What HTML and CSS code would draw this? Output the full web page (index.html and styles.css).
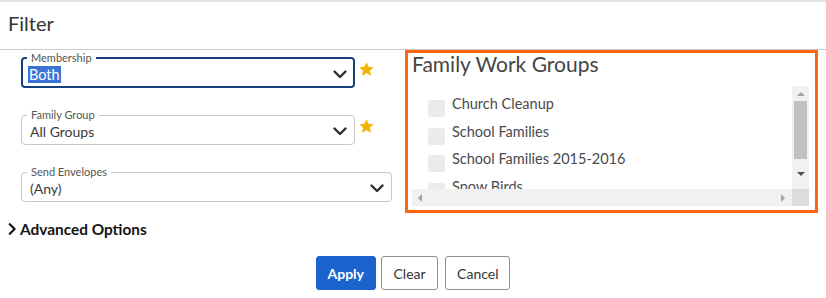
FILE: index.html
```html
<!DOCTYPE html>
<html lang="en">
<head>
<meta charset="utf-8">
<title>Filter</title>
<link rel="stylesheet" href="styles.css">
</head>
<body>
<div class="backdrop-strip"></div>
<header class="dlg-header">
  <h1 class="dlg-title">Filter</h1>
</header>
<main class="dlg-body">
  <section class="fields">
    <div class="field-row">
      <fieldset class="field field-focus">
        <legend class="field-label">Membership</legend>
        <div class="field-control">
          <span class="field-value selected">Both</span>
          <svg class="chev-down" width="14" height="9" viewBox="0 0 14 9"><path d="M1.5 1.5 L7 7 L12.5 1.5" fill="none" stroke="#2b2f33" stroke-width="2.4" stroke-linecap="round" stroke-linejoin="round"/></svg>
        </div>
      </fieldset>
      <svg class="star" width="15" height="15" viewBox="0 0 24 24"><path d="M12 1.5 L15.1 8.2 L22.4 8.9 L16.9 13.8 L18.5 21 L12 17.3 L5.5 21 L7.1 13.8 L1.6 8.9 L8.9 8.2 Z" fill="#f0b400" stroke="#f0b400" stroke-width="1.2" stroke-linejoin="round"/></svg>
    </div>
    <div class="field-row">
      <fieldset class="field">
        <legend class="field-label">Family Group</legend>
        <div class="field-control">
          <span class="field-value">All Groups</span>
          <svg class="chev-down" width="14" height="9" viewBox="0 0 14 9"><path d="M1.5 1.5 L7 7 L12.5 1.5" fill="none" stroke="#2b2f33" stroke-width="2.4" stroke-linecap="round" stroke-linejoin="round"/></svg>
        </div>
      </fieldset>
      <svg class="star" width="15" height="15" viewBox="0 0 24 24"><path d="M12 1.5 L15.1 8.2 L22.4 8.9 L16.9 13.8 L18.5 21 L12 17.3 L5.5 21 L7.1 13.8 L1.6 8.9 L8.9 8.2 Z" fill="#f0b400" stroke="#f0b400" stroke-width="1.2" stroke-linejoin="round"/></svg>
    </div>
    <div class="field-row">
      <fieldset class="field field-wide">
        <legend class="field-label">Send Envelopes</legend>
        <div class="field-control">
          <span class="field-value">(Any)</span>
          <svg class="chev-down" width="14" height="9" viewBox="0 0 14 9"><path d="M1.5 1.5 L7 7 L12.5 1.5" fill="none" stroke="#2b2f33" stroke-width="2.4" stroke-linecap="round" stroke-linejoin="round"/></svg>
        </div>
      </fieldset>
    </div>
  </section>
  <section class="groups">
    <h2 class="groups-title">Family Work Groups</h2>
    <div class="list-box">
      <div class="list-view">
        <label class="list-item"><span class="check"></span><span class="item-text">Church Cleanup</span></label>
        <label class="list-item"><span class="check"></span><span class="item-text">School Families</span></label>
        <label class="list-item"><span class="check"></span><span class="item-text">School Families 2015-2016</span></label>
        <label class="list-item"><span class="check"></span><span class="item-text">Snow Birds</span></label>
      </div>
      <div class="vscroll">
        <span class="arrow arrow-up"></span>
        <span class="vthumb"></span>
        <span class="arrow arrow-down"></span>
      </div>
      <div class="hscroll">
        <span class="arrow arrow-left"></span>
        <span class="arrow arrow-right"></span>
      </div>
      <div class="corner"></div>
    </div>
  </section>
</main>
<div class="advanced">
  <svg class="chev-right" width="9" height="12" viewBox="0 0 9 12"><path d="M1.8 1.2 L6.6 6 L1.8 10.8" fill="none" stroke="#151515" stroke-width="2.2" stroke-linecap="round" stroke-linejoin="round"/></svg>
  <span class="advanced-text">Advanced Options</span>
</div>
<div class="actions">
  <button class="btn btn-primary">Apply</button>
  <button class="btn btn-secondary btn-clear">Clear</button>
  <button class="btn btn-secondary btn-cancel">Cancel</button>
</div>
</body>
</html>
```
FILE: styles.css
```css
* { box-sizing: border-box; }
html, body { margin: 0; padding: 0; background: #fff; }
body {
  width: 826px;
  height: 298px;
  overflow: hidden;
  font-family: Lato, "Noto Sans", sans-serif;
  color: #333;
}
.backdrop-strip {
  height: 2px;
  background: #e2e2e2;
}
.dlg-header {
  height: 48px;
  border-bottom: 1px solid #c9c9c9;
  padding: 9px 0 0 8px;
}
.dlg-title {
  margin: 0;
  font-size: 20px;
  line-height: 24px;
  font-weight: 400;
  color: #333;
}
.dlg-body {
  display: grid;
  grid-template-columns: 384px 413px;
  padding-left: 21px;
}
.fields {
  padding-top: 2px;
  display: flex;
  flex-direction: column;
  gap: 21px;
}
.field-row {
  display: flex;
  align-items: flex-start;
}
.field {
  margin: 0;
  width: 334px;
  border: 1px solid #c7c7c7;
  border-radius: 4px;
  padding: 0 7px 3px 8px;
  min-width: 0;
}
.field-focus {
  border: 2px solid #15407c;
  padding: 0 6px 2px 7px;
}
.field-wide { width: 371px; }
.field-label {
  font-size: 11px;
  line-height: 12px;
  color: #555;
  padding: 0 4px;
  margin-left: -3px;
}
.field-control {
  display: flex;
  align-items: center;
  justify-content: space-between;
  height: 20px;
}
.field-value {
  font-size: 14px;
  line-height: 17px;
  color: #3a3a3a;
}
.field-value.selected {
  background: #3b73d6;
  color: #fff;
  margin-left: -2px;
  padding: 0 1px;
  font-size: 14.5px;
}
.chev-down { display: block; margin-top: 1px; }
.star {
  display: block;
  margin: 10px 0 0 4px;
}
.groups {
  border: 3px solid #ff6411;
  height: 163px;
  padding: 0 6px 4px 4px;
  display: flex;
  flex-direction: column;
}
.groups-title {
  margin: 0 0 11px 0;
  font-size: 21px;
  line-height: 22px;
  font-weight: 400;
  color: #444;
}
.list-box {
  flex: 1;
  display: grid;
  grid-template-columns: 1fr 17px;
  grid-template-rows: 1fr 17px;
  min-height: 0;
}
.list-view {
  overflow: hidden;
  padding: 9px 0 0 16px;
}
.list-item {
  display: flex;
  align-items: flex-start;
  height: 27.5px;
}
.check {
  width: 17px;
  height: 17px;
  margin-top: 5px;
  border-radius: 3px;
  background: #ebebed;
  flex: none;
}
.item-text {
  margin-left: 7px;
  font-size: 14.5px;
  line-height: 18px;
  color: #474a4e;
}
.vscroll {
  background: #f1f1f1;
  display: flex;
  flex-direction: column;
  align-items: center;
  padding-top: 6px;
}
.vthumb {
  width: 13px;
  height: 58px;
  background: #c1c1c1;
  margin-top: 5px;
}
.arrow { width: 0; height: 0; display: block; }
.arrow-up {
  border-left: 4px solid transparent;
  border-right: 4px solid transparent;
  border-bottom: 4px solid #a3a3a3;
}
.arrow-down {
  margin-top: 13px;
  border-left: 4px solid transparent;
  border-right: 4px solid transparent;
  border-top: 4px solid #505050;
}
.hscroll {
  background: #f1f1f1;
  display: flex;
  align-items: center;
  justify-content: space-between;
  padding: 0 7px 0 6px;
}
.arrow-left {
  border-top: 4px solid transparent;
  border-bottom: 4px solid transparent;
  border-right: 4px solid #a3a3a3;
}
.arrow-right {
  border-top: 4px solid transparent;
  border-bottom: 4px solid transparent;
  border-left: 4px solid #a3a3a3;
}
.corner { background: #dcdcdc; }
.advanced {
  display: flex;
  align-items: center;
  margin: 6px 0 0 8px;
  height: 20px;
}
.chev-right { display: block; }
.advanced-text {
  margin-left: 3px;
  font-size: 15.4px;
  font-weight: 700;
  color: #151515;
}
.actions {
  display: flex;
  justify-content: center;
  margin-top: 17px;
}
.btn {
  height: 34px;
  border-radius: 3px;
  font-family: inherit;
  font-size: 14px;
  padding: 0 11px;
  margin: 0;
}
.btn-primary {
  background: #1b63cd;
  border: 1px solid #1b63cd;
  color: #fff;
  font-weight: 700;
}
.btn-secondary {
  background: #fff;
  border: 1px solid #8d9094;
  color: #333;
}
.btn-clear { margin-left: 5px; padding: 0 11.5px; }
.btn-cancel { margin-left: 7px; }
```
